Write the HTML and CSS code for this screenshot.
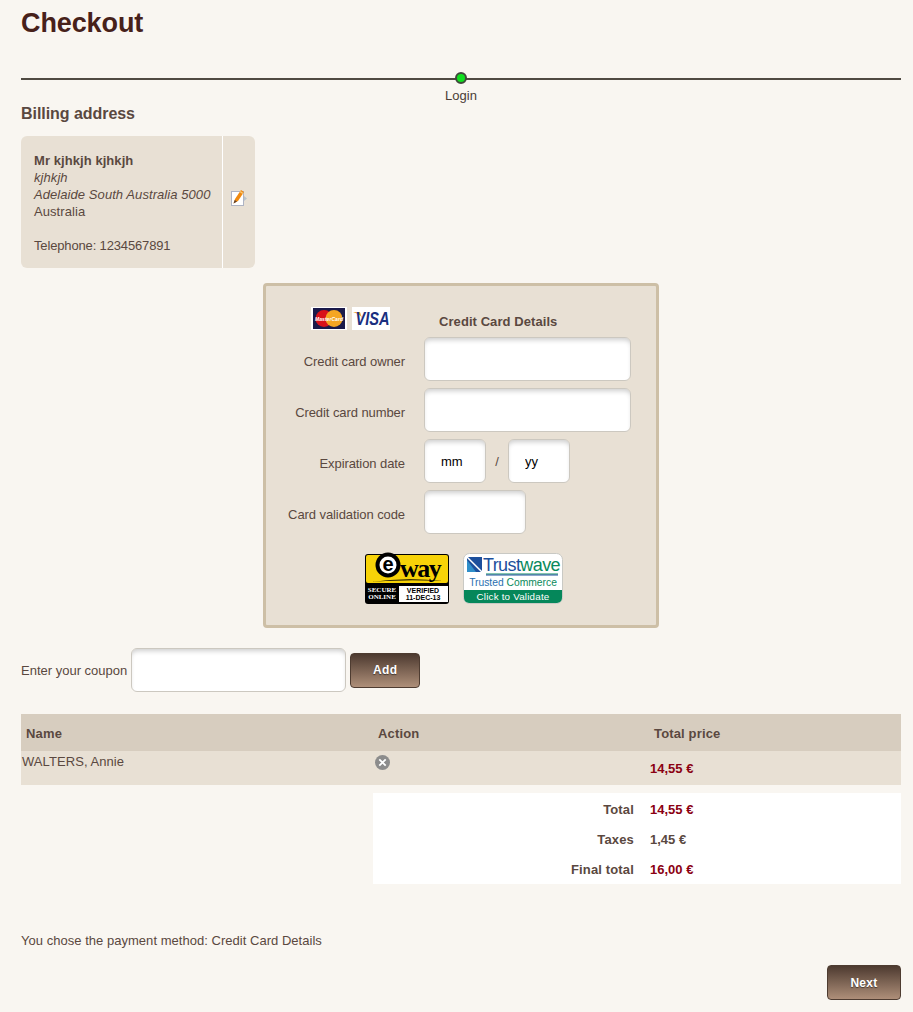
FILE: index.html
```html
<!DOCTYPE html>
<html lang="en">
<head>
    <meta charset="UTF-8">
    <meta name="viewport" content="width=device-width, initial-scale=1.0">
    <title>Checkout</title>
    <link rel="stylesheet" href="styles.css">
</head>
<body>
    <h1>Checkout</h1>

    <div class="progress">
        <div class="progress-line"><span class="progress-dot"></span></div>
        <p class="progress-label">Login</p>
    </div>

    <h2>Billing address</h2>
    <div class="address">
        <div class="address-text">
            <strong>Mr kjhkjh kjhkjh</strong><br>
            <em>kjhkjh</em><br>
            <em>Adelaide South Australia 5000</em><br>
            Australia<br>
            <br>
            <span class="tel">Telephone: 1234567891</span>
        </div>
        <a class="address-edit" href="#" aria-label="Edit">
            <svg width="18" height="18" viewBox="0 0 18 18">
                <path d="M14 7l3 2.500-3 2.500z" fill="#b9c4cc"/>
                <rect x="1.500" y="2.500" width="12" height="14" fill="#fff" stroke="#aeb4c4"/>
                <path d="M3.500 14.500l1.500-4.500 6-9 3 2-6 9z" fill="#f08a10"/>
                <path d="M10 2.500l3 2" stroke="#f8c878" stroke-width="1.500"/>
                <path d="M3.500 14.500l1.200-3.500 2.300 1.500z" fill="#5a4030"/>
            </svg>
        </a>
    </div>

    <form class="card">
        <div class="card-head">
            <div class="card-logos">
                <svg width="36" height="23" viewBox="0 0 36 23">
                    <rect width="36" height="23" fill="#fff"/>
                    <rect x="2" y="1" width="32" height="21" fill="#1a1a4a"/>
                    <circle cx="13" cy="11.500" r="8.500" fill="#d8121a"/>
                    <circle cx="23" cy="11.500" r="8.500" fill="#f5a623"/>
                    <text x="4" y="14" class="mc-text" textLength="28" lengthAdjust="spacingAndGlyphs">MasterCard</text>
                </svg>
                <svg width="38" height="23" viewBox="0 0 38 23">
                    <rect width="38" height="23" fill="#fff"/>
                    <path d="M1 5h7l2 6q-2-4-9-6z" fill="#f0a830"/>
                    <text x="3.500" y="18" class="visa-text" textLength="34" lengthAdjust="spacingAndGlyphs">VISA</text>
                </svg>
            </div>
            <p class="card-title">Credit Card Details</p>
        </div>

        <div class="card-row">
            <label>Credit card owner</label>
            <input class="field" type="text">
        </div>
        <div class="card-row">
            <label>Credit card number</label>
            <input class="field" type="text">
        </div>
        <div class="card-row">
            <label>Expiration date</label>
            <input class="field field-date" type="text" value="mm">
            <span class="date-sep">/</span>
            <input class="field field-date" type="text" value="yy">
        </div>
        <div class="card-row">
            <label>Card validation code</label>
            <input class="field field-cvc" type="text">
        </div>

        <div class="badges">
            <svg width="84" height="51" viewBox="0 0 84 51">
                <rect x="0" y="1" width="84" height="50" rx="3" fill="#000"/>
                <rect x="1" y="2" width="82" height="28" rx="2" fill="#f7d308"/>
                <rect x="34" y="33" width="49" height="16" fill="#fff"/>
                <circle cx="23" cy="12" r="12.500" fill="#000"/>
                <circle cx="23" cy="12" r="8.500" fill="#fff"/>
                <text x="23" y="17.500" class="ew-e">e</text>
                <text x="35" y="24" class="ew-way">way</text>
                <path d="M6 29q34-5 72-1q-40-2-72 1z" fill="#000"/>
                <text x="17" y="39" class="ew-small ew-light">SECURE</text>
                <text x="17" y="46" class="ew-small ew-light">ONLINE</text>
                <text x="58" y="39.500" class="ew-small">VERIFIED</text>
                <text x="58" y="46.500" class="ew-small">11-DEC-13</text>
            </svg>
            <svg width="100" height="51" viewBox="0 0 100 51">
                <rect x="0.500" y="0.500" width="99" height="50" rx="6" fill="#fff" stroke="#c9c9c4"/>
                <path d="M1 37h98v8a5 5 0 0 1-5 5H6a5 5 0 0 1-5-5z" fill="#05875a"/>
                <rect x="4" y="4" width="15" height="15" fill="#1c4f9c"/>
                <path d="M4 7l9 12H4z" fill="#2f8fc9"/>
                <path d="M4 4l15 15" stroke="#fff" stroke-width="1.500"/>
                <text x="20" y="18" class="tw-brand">Trust<tspan class="tw-green">wave</tspan></text>
                <rect x="23" y="20.500" width="72" height="1" fill="#0a8a5c"/>
                <rect x="23" y="21.500" width="72" height="1" fill="#1c4f9c"/>
                <text x="50" y="33" class="tw-sub">Trusted <tspan class="tw-green">Commerce</tspan></text>
                <text x="50" y="47" class="tw-click">Click to Validate</text>
            </svg>
        </div>
    </form>

    <div class="coupon">
        <label>Enter your coupon</label>
        <input class="field field-coupon" type="text">
        <button class="btn btn-add" type="button">Add</button>
    </div>

    <table class="items">
        <thead>
            <tr>
                <th class="col-name">Name</th>
                <th class="col-action">Action</th>
                <th>Total price</th>
            </tr>
        </thead>
        <tbody>
            <tr>
                <td>WALTERS, Annie</td>
                <td>
                    <svg class="remove" width="15" height="15" viewBox="0 0 15 15">
                        <circle cx="7.500" cy="7.500" r="7.500" fill="#8c8c8c"/>
                        <path d="M4.300 4.300l6.400 6.400M10.700 4.300l-6.400 6.400" stroke="#fff" stroke-width="1.800"/>
                    </svg>
                </td>
                <td class="price">14,55 €</td>
            </tr>
        </tbody>
    </table>

    <div class="totals">
        <div class="totals-row"><span class="totals-label">Total</span><span class="price">14,55 €</span></div>
        <div class="totals-row"><span class="totals-label">Taxes</span><span class="tax">1,45 €</span></div>
        <div class="totals-row"><span class="totals-label">Final total</span><span class="price">16,00 €</span></div>
    </div>

    <p class="payment">You chose the payment method: Credit Card Details</p>

    <div class="actions">
        <button class="btn btn-next" type="button">Next</button>
    </div>
</body>
</html>
```

FILE: styles.css
```css
html, body {
    height: 100%;
}

body {
    margin: 0;
    padding: 8px 12px 0 21px;
    box-sizing: border-box;
    overflow: hidden;
    background: #f9f6f1;
    color: #5a4840;
    font-family: "Liberation Sans", Arial, sans-serif;
    font-size: 13px;
    line-height: 17px;
    letter-spacing: 0.07px;
}

h1 {
    margin: 0;
    font-size: 27px;
    line-height: 30px;
    letter-spacing: -0.1px;
    color: #47211a;
}

h2 {
    margin: 0;
    font-size: 16px;
    line-height: 20px;
    letter-spacing: -0.05px;
}

/* progress bar */
.progress {
    margin-top: 40px;
}

.progress-line {
    position: relative;
    height: 2px;
    background: #504a42;
}

.progress-dot {
    position: absolute;
    left: 434px;
    top: -6px;
    width: 8px;
    height: 8px;
    border: 2px solid #40493b;
    border-radius: 50%;
    background: #10e020;
}

.progress-label {
    margin: 8px 0 0;
    text-align: center;
    line-height: 16px;
    color: #4b3d36;
}

/* address */
.address {
    display: flex;
    width: 234px;
    height: 132px;
    margin-top: 12px;
    border-radius: 6px;
    background: #e8e0d4;
}

.address-text {
    width: 202px;
    box-sizing: border-box;
    padding: 16px 0 0 13px;
    border-right: 1px solid #fff;
    white-space: nowrap;
}

.tel {
    letter-spacing: -0.15px;
}

.address-edit {
    display: flex;
    flex: 1;
    align-items: center;
    justify-content: center;
    padding-bottom: 8px;
}

/* credit card form */
.card {
    box-sizing: border-box;
    width: 396px;
    height: 345px;
    margin: 15px auto 0;
    padding: 21px 25px 0 0;
    border: 3px solid #cdbfa6;
    border-radius: 4px;
    background: #e8e0d4;
}

.card-head {
    display: flex;
    height: 30px;
}

.card-logos {
    display: flex;
    gap: 5px;
    width: 173px;
    padding-left: 45px;
    box-sizing: border-box;
}

.card-logos svg {
    overflow: visible;
}

.card-title {
    margin: 6px 0 0;
    font-weight: bold;
}

.card-row {
    display: flex;
    align-items: center;
    height: 44px;
    margin-bottom: 7px;
}

.card-row label {
    width: 139px;
    margin-right: 19px;
    padding-top: 4px;
    letter-spacing: -0.08px;
    text-align: right;
    white-space: nowrap;
}

.field {
    box-sizing: border-box;
    height: 44px;
    width: 207px;
    padding: 0 16px;
    border: 1px solid #ccc8c0;
    border-radius: 6px;
    background: #fff;
    box-shadow: inset 0 4px 5px -2px rgba(0, 0, 0, 0.2);
    color: #000;
    font-family: inherit;
    font-size: 13px;
    outline: none;
}

.field-date {
    width: 62px;
}

.field-cvc {
    width: 102px;
}

.field-coupon {
    width: 215px;
    margin-left: 4px;
}

.date-sep {
    width: 22px;
    text-align: center;
}

.badges {
    display: flex;
    justify-content: center;
    gap: 14px;
    margin: 19px 0 0 31px;
}

.badges svg {
    display: block;
    overflow: visible;
}

/* svg logo text */
.mc-text {
    fill: #fff;
    font-size: 6px;
    font-weight: bold;
    font-style: italic;
    letter-spacing: 0;
}

.visa-text {
    fill: #1a2f80;
    font-size: 18px;
    font-weight: bold;
    font-style: italic;
    letter-spacing: 0;
}

.ew-e {
    fill: #000;
    font-size: 20px;
    font-weight: bold;
    text-anchor: middle;
    letter-spacing: 0;
}

.ew-way {
    fill: #000;
    font-family: "Liberation Serif", serif;
    font-size: 26px;
    font-weight: bold;
    letter-spacing: -1.5px;
}

.ew-small {
    fill: #000;
    font-size: 7px;
    font-weight: bold;
    text-anchor: middle;
    letter-spacing: 0;
}

.ew-light {
    fill: #fff;
    font-family: "Liberation Serif", serif;
}

.tw-brand {
    fill: #1c4f9c;
    font-size: 18px;
    letter-spacing: -0.6px;
}

.tw-green {
    fill: #0a8a5c;
}

.tw-sub {
    fill: #2a6fb0;
    font-size: 10.300px;
    text-anchor: middle;
    letter-spacing: 0;
}

.tw-click {
    fill: #fff;
    font-size: 9.800px;
    text-anchor: middle;
    letter-spacing: 0.2px;
}

/* coupon */
.coupon {
    display: flex;
    align-items: center;
    margin-top: 20px;
    letter-spacing: 0;
}

.btn {
    height: 35px;
    border: 1px solid #4e3c31;
    border-radius: 4px;
    background: linear-gradient(to bottom, #4d3a30, #ae8f79);
    color: #fff;
    font-family: inherit;
    font-size: 12px;
    font-weight: bold;
    letter-spacing: 0.3px;
    text-shadow: 0 1px 1px rgba(0, 0, 0, 0.5);
}

.btn-add {
    width: 70px;
    margin-left: 4px;
}

.btn-next {
    width: 74px;
}

/* cart table */
.items {
    width: 100%;
    margin-top: 22px;
    border-collapse: collapse;
    table-layout: fixed;
}

.items th {
    box-sizing: border-box;
    height: 37px;
    padding: 2px 0 0 5px;
    background: #d7cdbf;
    font-size: 13px;
    letter-spacing: 0.15px;
    text-align: left;
}

.items .col-name {
    width: 352px;
}

.items .col-action {
    width: 276px;
}

.items td {
    box-sizing: border-box;
    height: 34px;
    padding: 2px 0 0 1px;
    background: #e8e0d4;
    vertical-align: top;
}

.items td:nth-child(2) {
    padding-left: 2px;
}

.remove {
    display: block;
    margin-top: 2px;
}

.items .price {
    padding-top: 9px;
}

.price {
    color: #8b0012;
    font-weight: bold;
    letter-spacing: 0;
}

/* totals */
.totals {
    box-sizing: border-box;
    height: 91px;
    margin: 8px 0 0 352px;
    padding-top: 1px;
    background: #fff;
    letter-spacing: 0;
}

.totals-row {
    display: flex;
    align-items: center;
    height: 30px;
}

.totals-label {
    width: 261px;
    margin-right: 16px;
    letter-spacing: 0.15px;
    text-align: right;
    font-weight: bold;
}

.tax {
    font-weight: bold;
}

.payment {
    margin: 48px 0 0;
    letter-spacing: 0.03px;
}

.actions {
    display: flex;
    justify-content: flex-end;
    margin-top: 16px;
}
```
